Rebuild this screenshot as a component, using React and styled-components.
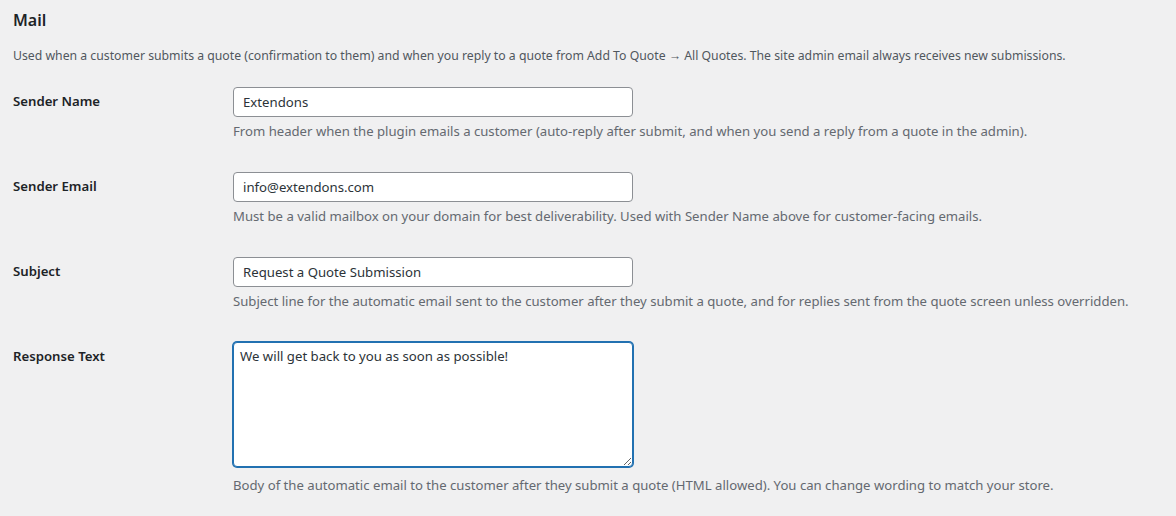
import React from "react";
import styled, { createGlobalStyle } from "styled-components";

const GlobalStyle = createGlobalStyle`
  html, body {
    margin: 0;
    padding: 0;
    background: #f0f0f1;
  }
  body {
    font-family: "Noto Sans", "Open Sans", sans-serif;
    color: #1d2327;
    font-size: 13px;
  }
`;

const Page = styled.div`
  padding: 0 13px;
  min-height: 516px;
  box-sizing: border-box;
`;

const Heading = styled.h2`
  font-size: 16px;
  font-weight: 600;
  margin: 0;
  padding-top: 9px;
  line-height: 23px;
  color: #1d2327;
`;

const Intro = styled.p`
  margin: 14px 0 0;
  font-size: 12.25px;
  line-height: 20px;
  color: #50575e;
`;

const FormTable = styled.div`
  margin-top: 6px;
  display: flex;
  flex-direction: column;
`;

const Row = styled.div`
  display: grid;
  grid-template-columns: 220px 1fr;
`;

const Label = styled.label`
  font-size: 13.2px;
  font-weight: 600;
  line-height: 18px;
  padding-top: 20px;
`;

const Field = styled.div`
  padding: 15px 0 16px;
  display: flex;
  flex-direction: column;
  align-items: flex-start;
`;

const TextInput = styled.input`
  box-sizing: border-box;
  width: 400px;
  height: 30px;
  margin: 0;
  padding: 0 9px;
  border: 1px solid #8c8f94;
  border-radius: 4px;
  background: #fff;
  font-family: inherit;
  font-size: 13.2px;
  color: #2c3338;
  outline: none;
`;

const TextArea = styled.textarea`
  box-sizing: border-box;
  width: 400px;
  height: 125px;
  margin: 0;
  padding: 3px 6px;
  border: 1px solid #2271b1;
  box-shadow: 0 0 0 1px #2271b1;
  border-radius: 4px;
  background: #fff;
  font-family: inherit;
  font-size: 13.2px;
  line-height: 20px;
  color: #2c3338;
  caret-color: #1d2327;
  outline: none;
  resize: both;
  display: block;
`;

const Hint = styled.p`
  margin: ${(p) => p.$gap || 4}px 0 0;
  font-size: 13.15px;
  line-height: 20px;
  color: #646970;
  white-space: nowrap;
`;

const fields = [
  {
    label: "Sender Name",
    value: "Extendons",
    hint: "From header when the plugin emails a customer (auto-reply after submit, and when you send a reply from a quote in the admin).",
  },
  {
    label: "Sender Email",
    value: "info@extendons.com",
    hint: "Must be a valid mailbox on your domain for best deliverability. Used with Sender Name above for customer-facing emails.",
  },
  {
    label: "Subject",
    value: "Request a Quote Submission",
    hint: "Subject line for the automatic email sent to the customer after they submit a quote, and for replies sent from the quote screen unless overridden.",
  },
];

export default function App() {
  return (
    <Page>
      <GlobalStyle />
      <Heading>Mail</Heading>
      <Intro>
        Used when a customer submits a quote (confirmation to them) and when you
        reply to a quote from Add To Quote → All Quotes. The site admin email
        always receives new submissions.
      </Intro>
      <FormTable>
        {fields.map((f) => (
          <Row key={f.label}>
            <Label>{f.label}</Label>
            <Field>
              <TextInput type="text" defaultValue={f.value} />
              <Hint>{f.hint}</Hint>
            </Field>
          </Row>
        ))}
        <Row>
          <Label>Response Text</Label>
          <Field>
            <TextArea
              autoFocus
              defaultValue="We will get back to you as soon as possible!"
            />
            <Hint $gap={8}>
              Body of the automatic email to the customer after they submit a
              quote (HTML allowed). You can change wording to match your store.
            </Hint>
          </Field>
        </Row>
      </FormTable>
    </Page>
  );
}
